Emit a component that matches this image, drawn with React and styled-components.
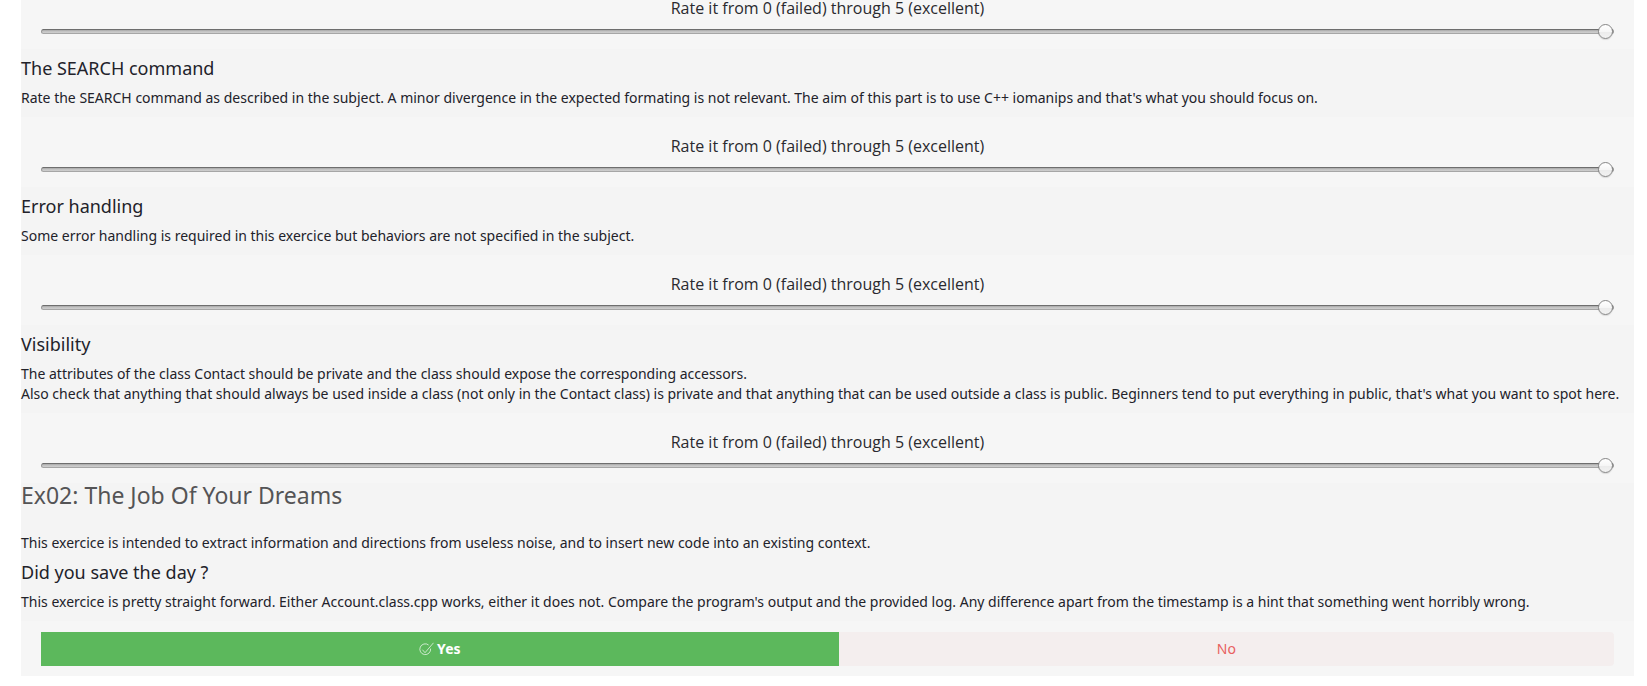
import React, { useId, useState } from "react";
import styled, { createGlobalStyle, css } from "styled-components";

const GlobalStyle = createGlobalStyle`
  *, *::before, *::after { box-sizing: border-box; }
  body {
    margin: 0;
    background: #fff;
    color: #22222a;
    font-family: "Noto Sans", "Open Sans", sans-serif;
    font-size: 14px;
    line-height: 20px;
    overflow: hidden;
  }
`;

const Sheet = styled.main`
  margin: -21px 13px 0 21px;
  background: #f4f4f4;
`;

const Intro = styled.section`
  padding: 0;
`;

const ExerciseTitle = styled.h3`
  margin: 0 0 26px;
  color: #545456;
  font-size: 23px;
  font-weight: 400;
  line-height: 24px;
`;

const Question = styled.section`
  padding: 6px 0 9px;
`;

const QuestionTitle = styled.h4`
  margin: 0 0 7px;
  font-size: 18px;
  font-weight: 400;
  line-height: 26px;
`;

const Paragraph = styled.p`
  margin: 0;
`;

const RatingPanel = styled.div`
  display: flex;
  flex-direction: column;
  gap: 1px;
  padding: 17px 20px 7px;
  background: #f6f6f6;
`;

const RatingLabel = styled.label`
  color: #2a2a2f;
  font-family: "Open Sans", "Noto Sans", sans-serif;
  font-size: 16px;
  line-height: 24px;
  text-align: center;
`;

const track = css`
  height: 5px;
  border: 1px solid #999;
  border-top-color: #6e6e6e;
  border-bottom-color: #a6a6a6;
  border-radius: 3px;
  background: linear-gradient(#a8a8a8, #c8c8c8 60%, #cccccc);
`;

const thumb = css`
  width: 15px;
  height: 15px;
  border: 1px solid #868686;
  border-radius: 50%;
  background: linear-gradient(#ffffff, #f6f6f6 50%, #ebebeb 51%, #f2f2f2);
  box-shadow: 0 1px 1px rgba(0, 0, 0, 0.12);
`;

const Slider = styled.input`
  appearance: none;
  display: block;
  width: 100%;
  height: 21px;
  margin: 0;
  background: transparent;

  &::-webkit-slider-runnable-track { ${track} }
  &::-webkit-slider-thumb {
    appearance: none;
    margin-top: -6px;
    ${thumb}
  }
  &::-moz-range-track { ${track} }
  &::-moz-range-thumb { ${thumb} }
`;

const AnswerPanel = styled.div`
  display: flex;
  padding: 11px 20px 10px;
  background: #f6f6f6;
`;

const AnswerButton = styled.button`
  display: flex;
  flex: 1 1 auto;
  align-items: center;
  justify-content: center;
  gap: 3px;
  height: 34px;
  padding: 0 12px;
  border: 0;
  border-radius: ${(p) => (p.$tone === "no" ? "0 4px 4px 0" : "0")};
  background: ${(p) => (p.$tone === "no" ? "#f4eeee" : "#5cb85c")};
  color: ${(p) => (p.$tone === "no" ? "#e8605f" : "#fff")};
  font-family: inherit;
  font-size: 14px;
  font-weight: ${(p) => (p.$tone === "no" ? 400 : 700)};
  line-height: 20px;
  cursor: pointer;
`;

const CheckIcon = () => (
  <svg width="15" height="15" viewBox="0 0 15 15" fill="none" stroke="#fff" strokeWidth="0.8" strokeOpacity="0.85" aria-hidden="true">
    <path d="M9.6 3A5.4 5.4 0 1 0 11.6 6.6" />
    <path d="M3.4 7.7L6 10.7L14.5 0.8" />
  </svg>
);

function Rating() {
  const id = useId();
  const [value, setValue] = useState(5);
  return (
    <RatingPanel>
      <RatingLabel htmlFor={id}>Rate it from 0 (failed) through 5 (excellent)</RatingLabel>
      <Slider id={id} type="range" min="0" max="5" value={value} onChange={(e) => setValue(Number(e.target.value))} />
    </RatingPanel>
  );
}

const ratedQuestions = [
  {
    title: "The SEARCH command",
    lines: [
      "Rate the SEARCH command as described in the subject. A minor divergence in the expected formating is not relevant. The aim of this part is to use C++ iomanips and that's what you should focus on.",
    ],
  },
  {
    title: "Error handling",
    lines: ["Some error handling is required in this exercice but behaviors are not specified in the subject."],
  },
  {
    title: "Visibility",
    lines: [
      "The attributes of the class Contact should be private and the class should expose the corresponding accessors.",
      "Also check that anything that should always be used inside a class (not only in the Contact class) is private and that anything that can be used outside a class is public. Beginners tend to put everything in public, that's what you want to spot here.",
    ],
  },
];

export default function App() {
  return (
    <>
      <GlobalStyle />
      <Sheet>
        <Rating />
        {ratedQuestions.map((q) => (
          <React.Fragment key={q.title}>
            <Question>
              <QuestionTitle>{q.title}</QuestionTitle>
              {q.lines.map((line) => (
                <Paragraph key={line}>{line}</Paragraph>
              ))}
            </Question>
            <Rating />
          </React.Fragment>
        ))}
        <Intro>
          <ExerciseTitle>Ex02: The Job Of Your Dreams</ExerciseTitle>
          <Paragraph>
            This exercice is intended to extract information and directions from useless noise, and to insert new code into an existing context.
          </Paragraph>
        </Intro>
        <Question>
          <QuestionTitle>Did you save the day ?</QuestionTitle>
          <Paragraph>
            This exercice is pretty straight forward. Either Account.class.cpp works, either it does not. Compare the program's output and the provided log. Any difference apart from the timestamp is a hint that something went horribly wrong.
          </Paragraph>
        </Question>
        <AnswerPanel>
          <AnswerButton type="button" $tone="yes">
            <CheckIcon />
            Yes
          </AnswerButton>
          <AnswerButton type="button" $tone="no">No</AnswerButton>
        </AnswerPanel>
      </Sheet>
    </>
  );
}
